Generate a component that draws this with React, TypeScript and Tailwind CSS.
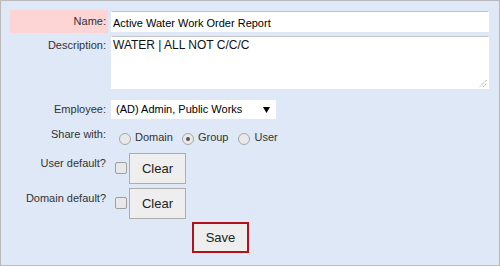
import React from 'react'

function Radio({ checked = false }: { checked?: boolean }) {
  return (
    <span className="mt-[6px] flex h-[12px] w-[12px] items-center justify-center rounded-full border border-[#a6a6a6] bg-[#e9e9e9]">
      {checked && <span className="h-[4px] w-[4px] rounded-full bg-[#555]" />}
    </span>
  )
}

function Check() {
  return <span className="mt-[9px] ml-[4px] h-[12px] w-[12px] rounded-[2px] border border-[#9f9f9f] bg-[#e8e8e8]" />
}

function Btn({ label, className = '' }: { label: string; className?: string }) {
  return (
    <button
      type="button"
      className={`h-[31px] w-[57px] bg-[#eeeeee] text-[13px] text-[#222] ${className}`}
    >
      {label}
    </button>
  )
}

export default function App() {
  return (
    <div className="h-[266px] w-[500px] border border-[#bababa] bg-[#dfe8f6] pt-[9px] pr-[10px] pl-[9px] font-['Liberation_Sans',Arial,sans-serif] text-[11px] text-[#333]">
      {/* Name */}
      <div className="flex items-start">
        <div className="h-[23px] w-[98px] bg-[#fdd5d5] pt-[4px] pr-[2px] text-right leading-[14px]">Name:</div>
        <input
          readOnly
          value="Active Water Work Order Report"
          className="mt-[1px] ml-[3px] h-[21px] w-[378px] border border-white border-t-[#c4c4c4] bg-white pt-[2px] pl-[1px] text-[11px] leading-[14px] text-black outline-none"
        />
      </div>

      {/* Description */}
      <div className="mt-[3px] flex items-start">
        <div className="w-[98px] pt-[2px] pr-[2px] text-right leading-[14px]">Description:</div>
        <div className="relative ml-[3px]">
          <textarea
            readOnly
            value="WATER | ALL NOT C/C/C"
            className="block h-[53px] w-[378px] resize-none border border-white border-t-[#c4c4c4] bg-white pt-[1px] pl-[1px] font-['Liberation_Sans',Arial,sans-serif] text-[12px] leading-[14px] text-[#111] outline-none"
          />
          <svg className="absolute right-[2px] bottom-[2px]" width="8" height="8" viewBox="0 0 8 8">
            <path d="M1 7.5 L7.5 1 M4.5 7.5 L7.5 4.5" stroke="#777" strokeWidth="1" strokeDasharray="1 1" />
          </svg>
        </div>
      </div>

      {/* Employee */}
      <div className="mt-[11px] flex items-start">
        <div className="w-[98px] pr-[2px] text-right leading-[19px]">Employee:</div>
        <div className="ml-[3px] flex h-[19px] w-[165px] items-center justify-between bg-white pr-[6px] pl-[5px] text-[11px] text-black">
          <span>(AD) Admin, Public Works</span>
          <svg width="7" height="6" viewBox="0 0 7 6">
            <polygon points="0,0 7,0 3.5,6" fill="#000" />
          </svg>
        </div>
      </div>

      {/* Share with */}
      <div className="mt-[8px] flex h-[18px] items-start">
        <div className="w-[98px] pr-[2px] text-right leading-[14px]">Share with:</div>
        <div className="ml-[11px] flex items-start">
          <Radio />
          <span className="mt-[3px] ml-[4px] leading-[14px]">Domain</span>
          <span className="ml-[9px]"><Radio checked /></span>
          <span className="mt-[3px] ml-[4px] leading-[14px]">Group</span>
          <span className="ml-[10px]"><Radio /></span>
          <span className="mt-[3px] ml-[4px] leading-[14px]">User</span>
        </div>
      </div>

      {/* User default */}
      <div className="mt-[8px] flex h-[31px] items-start">
        <div className="w-[98px] pt-[3px] pr-[2px] text-right leading-[14px]">User default?</div>
        <div className="ml-[3px] flex items-start">
          <Check />
          <Btn label="Clear" className="ml-[2px] border border-[#adadad]" />
        </div>
      </div>

      {/* Domain default */}
      <div className="mt-[4px] flex h-[31px] items-start">
        <div className="w-[98px] pt-[3px] pr-[2px] text-right leading-[14px]">Domain default?</div>
        <div className="ml-[3px] flex items-start">
          <Check />
          <Btn label="Clear" className="ml-[2px] border border-[#adadad]" />
        </div>
      </div>

      {/* Save */}
      <div className="mt-[3px] flex">
        <Btn label="Save" className="ml-[182px] w-[56px] border-2 border-[#b3121a]" />
      </div>
    </div>
  )
}
